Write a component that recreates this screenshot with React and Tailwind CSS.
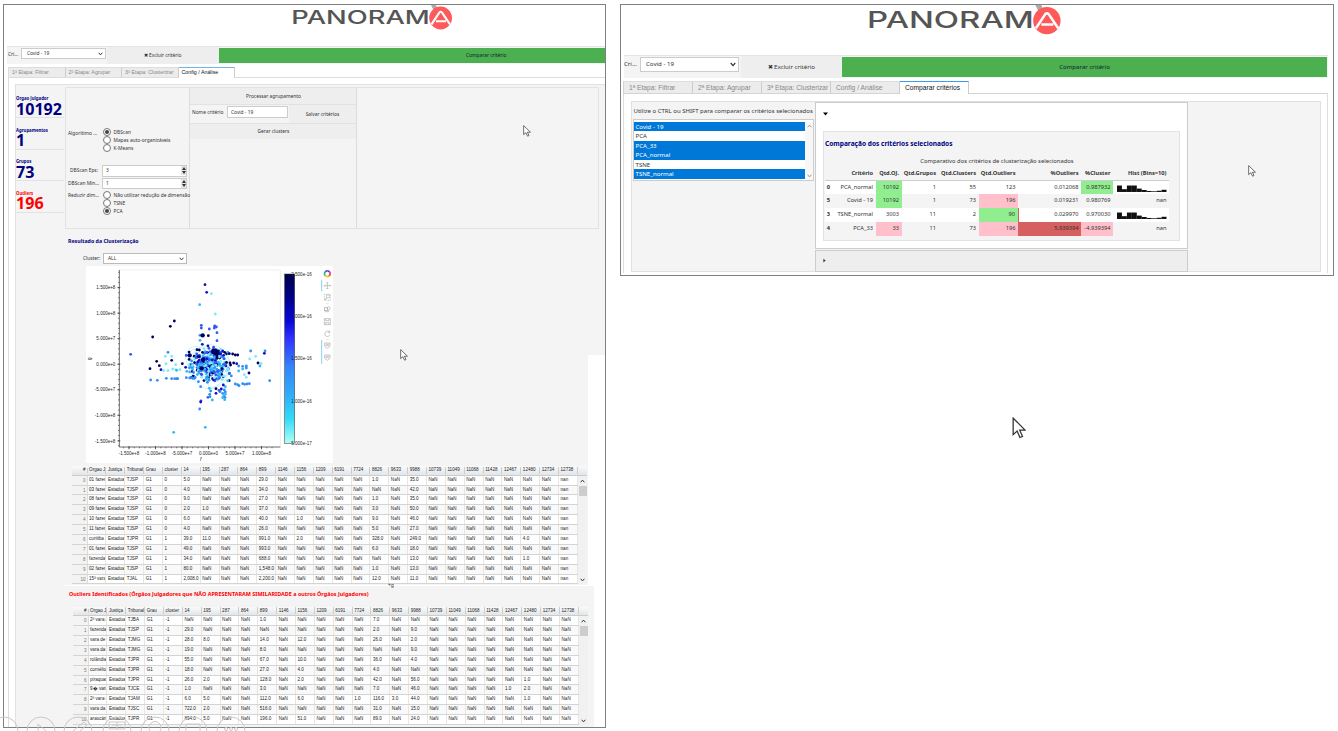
import React from "react";

const NOTO = "font-['Noto_Sans','Open_Sans',sans-serif]";

function Cursor({ className }) {
  return (
    <svg className={className} viewBox="0 0 12 20" preserveAspectRatio="none">
      <path d="M1 1 L1 16 L4.4 12.8 L6.8 18.6 L9 17.6 L6.6 12 L11.2 12 Z" fill="#fff" stroke="#333" strokeWidth="1.1" />
    </svg>
  );
}

function Logo({ className }) {
  return (
    <svg className={className} viewBox="0 0 162 26">
      <text x="-0.8" y="19.2" fontFamily="Inter, sans-serif" fontSize="18.6" fontWeight="500" fill="#555" textLength="138.5" lengthAdjust="spacingAndGlyphs">PANORAM</text>
      <path d="M139 0 L144 0 L146 5 L141.5 5 Z" fill="#aaa" />
      <circle cx="148.6" cy="13" r="11.4" fill="#ff5a5a" />
      <path d="M139.5 19.3 L147.3 7.6 Q148.7 6 150.1 7.6 L158 19.3 M144 16.2 H154" fill="none" stroke="#fff" strokeWidth="2.1" />
    </svg>
  );
}

function Radio({ label, on, className = "" }) {
  return (
    <div className={`flex items-center gap-[3px] h-[8px] ${className}`}>
      <span className="size-[8px] shrink-0 rounded-full border border-[#777] bg-white flex items-center justify-center">
        {on && <span className="size-[4px] rounded-full bg-[#444]" />}
      </span>
      <span>{label}</span>
    </div>
  );
}

function Chevron({ className }) {
  return (
    <svg className={className} viewBox="0 0 8 6"><path d="M1 1 L4 4.4 L7 1" fill="none" stroke="#333" strokeWidth="1.6" /></svg>
  );
}

function Spin({ value }) {
  return (
    <div className="ml-[3px] flex h-[11.5px] w-[85px] items-center border border-[#ccc] bg-white pl-[3px]">
      <span className="flex-1">{value}</span>
      <span className="flex h-[9px] w-[5px] flex-col items-center justify-between bg-[#e4e4e4] py-[1px]">
        <svg className="h-[3px] w-[4px]" viewBox="0 0 4 3"><path d="M0 3 L2 0 L4 3Z" fill="#333" /></svg>
        <svg className="h-[3px] w-[4px]" viewBox="0 0 4 3"><path d="M0 0 L2 3 L4 0Z" fill="#333" /></svg>
      </span>
    </div>
  );
}

const STATS = [
  ["Orgao Julgador", "10192", "text-[#000080]"],
  ["Agrupamentos", "1", "text-[#000080]"],
  ["Grupos", "73", "text-[#000080]"],
  ["Outliers", "196", "text-[#ff0000]"],
];

const N = "NaN";
const HEAD = ["Orgao J", "Justiça", "Tribunal", "Grau", "cluster", "14", "195", "287", "864", "899", "1146", "1156", "1209", "6191", "7724", "8826", "9633", "9988", "10739", "11049", "11068", "11428", "12467", "12480", "12734", "12738"];
const row = (name, trib, cl, vals, last = N) => {
  const cells = [name, "Estadual", trib, "G1", cl];
  for (const h of HEAD.slice(5)) cells.push(vals[h] ?? (h === "12738" ? last : N));
  return cells;
};
const CLUSTERS = [
  row("01 fazen", "TJSP", "0", { 14: "5.0", 899: "29.0", 8826: "1.0", 9988: "35.0" }, "nan"),
  row("03 fazen", "TJSP", "0", { 14: "4.0", 899: "34.0", 9988: "42.0" }, "nan"),
  row("08 fazen", "TJSP", "0", { 14: "9.0", 899: "27.0", 8826: "1.0", 9988: "35.0" }, "nan"),
  row("09 fazen", "TJSP", "0", { 14: "2.0", 195: "1.0", 899: "37.0", 8826: "3.0", 9988: "50.0" }, "nan"),
  row("10 fazen", "TJSP", "0", { 14: "6.0", 899: "40.0", 1156: "1.0", 8826: "9.0", 9988: "46.0" }, "nan"),
  row("11 fazen", "TJSP", "0", { 14: "4.0", 899: "26.0", 8826: "5.0", 9988: "27.0" }, "nan"),
  row("curitiba -", "TJPR", "1", { 14: "39.0", 195: "11.0", 899: "991.0", 1156: "2.0", 8826: "328.0", 9988: "249.0", 12480: "4.0" }, "nan"),
  row("01 fazen", "TJSP", "1", { 14: "49.0", 899: "993.0", 8826: "6.0", 9988: "18.0" }, "nan"),
  row("fazenda", "TJSP", "1", { 14: "34.0", 899: "688.0", 9988: "13.0", 12480: "1.0" }, "nan"),
  row("02 fazen", "TJSP", "1", { 14: "80.0", 899: "1,548.0", 8826: "1.0", 9988: "13.0" }, "nan"),
  row("15ª vara", "TJAL", "1", { 14: "2,008.0", 899: "2,200.0", 8826: "12.0", 9988: "11.0" }, "nan"),
];
const OUTLIERS = [
  row("2ª vara c", "TJBA", "-1", { 14: N, 899: "1.0", 8826: "7.0" }),
  row("fazenda", "TJSP", "-1", { 14: "29.0", 8826: "2.0", 9988: "9.0" }),
  row("vara de f", "TJMG", "-1", { 14: "28.0", 195: "8.0", 899: "14.0", 1156: "12.0", 8826: "26.0", 9988: "2.0" }),
  row("vara da f", "TJMG", "-1", { 14: "19.0", 899: "8.0", 9988: "9.0" }),
  row("rolândia", "TJPR", "-1", { 14: "55.0", 899: "67.0", 1156: "10.0", 8826: "36.0", 9988: "4.0" }),
  row("cornélio", "TJPR", "-1", { 14: "18.0", 899: "27.0", 1156: "4.0", 8826: "4.0" }),
  row("piraquar", "TJPR", "-1", { 14: "26.0", 195: "2.0", 899: "128.0", 1156: "2.0", 8826: "42.0", 9988: "56.0", 12480: "1.0" }),
  row("9� vara", "TJCE", "-1", { 14: "1.0", 899: "3.0", 8826: "7.0", 9988: "46.0", 12467: "1.0", 12480: "2.0" }),
  row("2ª vara c", "TJAM", "-1", { 14: "6.0", 195: "5.0", 899: "112.0", 1156: "6.0", 7724: "1.0", 8826: "116.0", 9633: "3.0", 9988: "44.0", 12480: "1.0" }),
  row("vara da f", "TJSC", "-1", { 14: "722.0", 195: "2.0", 899: "516.0", 8826: "31.0", 9988: "15.0" }),
  row("araucári", "TJPR", "-1", { 14: "894.0", 195: "5.0", 899: "196.0", 1156: "51.0", 8826: "89.0", 9988: "24.0" }),
];

function Grid({ rows, className = "" }) {
  return (
    <div className={`flex w-[515px] font-['Liberation_Sans',sans-serif] text-[4.55px] leading-none text-[#222] ${className}`}>
      <div className="flex w-[506px] flex-col">
        <div className="grid h-[9.7px] grid-cols-[15.5px_repeat(26,18.87px)] items-center border-b border-[#ccc] bg-gradient-to-b from-[#fafafa] to-[#e2e6ea]">
          <span className="border-r border-[#ccc] pr-[1px] text-right">#</span>
          {HEAD.map((h, i) => <span key={i} className="h-[7px] overflow-hidden whitespace-nowrap border-r border-[#ccc] pl-[1.6px] pt-[1.5px]">{h}</span>)}
        </div>
        {rows.map((r, y) => (
          <div key={y} className={`grid h-[9.9px] grid-cols-[15.5px_repeat(26,18.87px)] border-b border-[#d4d4d4] ${y % 2 ? "bg-[#f9f9f9]" : "bg-white"}`}>
            <span className="border-r border-[#ddd] bg-[#f3f3f3] pr-[1px] pt-[3px] text-right text-[#777]">{y}</span>
            {r.map((c, i) => <span key={i} className="overflow-hidden whitespace-nowrap border-r border-[#e6e6e6] pl-[1.6px] pt-[2px]">{c}</span>)}
          </div>
        ))}
      </div>
      <div className="flex w-[9px] flex-col items-center bg-[#f1f1f1]">
        <div className="h-[9.7px] w-full border-b border-[#ccc] bg-gradient-to-b from-[#fafafa] to-[#e2e6ea]" />
        <Chevron className="mt-[3px] h-[4px] w-[5px] rotate-180" />
        <div className="mt-[3px] h-[10px] w-[8px] bg-[#cdcdcd]" />
        <Chevron className="mb-[2px] mt-auto h-[4px] w-[5px]" />
      </div>
    </div>
  );
}

/* Scatter samples: x, y, tone */
const TONES = ["#000060", "#1010c0", "#3355f5", "#2f8ff5", "#35b8f2", "#7feaf5"];
const SPARSE = [
  [615, 179, 1], [620, 202, 1], [634, 206, 5], [599, 239, 4], [646, 267, 5], [523, 288, 0], [511, 304, 0], [458, 336, 0],
  [392, 388, 2], [604, 301, 2], [604, 309, 2], [628, 312, 2], [644, 303, 2], [649, 306, 2], [643, 309, 2], [651, 323, 2],
  [651, 347, 2], [600, 331, 3], [600, 346, 4], [607, 358, 1], [625, 332, 0], [504, 382, 3], [515, 394, 5], [496, 394, 5],
  [515, 406, 0], [470, 409, 0], [478, 422, 0], [450, 431, 0], [483, 434, 1], [498, 416, 5], [527, 419, 5], [491, 437, 5],
  [504, 437, 5], [452, 465, 3], [472, 466, 3], [499, 460, 3], [515, 461, 3], [524, 461, 3], [530, 461, 3], [533, 461, 3], [547, 416, 0],
  [518, 432, 5], [527, 434, 5], [557, 427, 1], [559, 458, 3], [569, 459, 3], [577, 459, 3], [583, 460, 3], [530, 436, 4], [540, 434, 5],
  [752, 378, 3], [795, 378, 3], [793, 385, 1], [749, 402, 5], [767, 394, 5], [783, 415, 5], [774, 414, 0], [780, 423, 4],
  [747, 444, 0], [809, 467, 3], [739, 457, 5], [733, 449, 5], [716, 438, 4], [728, 432, 4], [739, 423, 3], [728, 424, 3],
  [716, 423, 3], [739, 429, 3], [706, 477, 3], [713, 479, 3], [717, 482, 3], [728, 476, 3], [734, 478, 3], [741, 477, 3], [748, 476, 3],
  [602, 485, 3], [603, 528, 2], [602, 531, 1], [599, 552, 3], [521, 622, 4], [616, 607, 4],
  [674, 382, 0], [688, 386, 0], [698, 387, 0], [706, 390, 0], [713, 390, 0], [690, 414, 0], [701, 414, 0], [710, 416, 1],
  [671, 391, 1], [662, 387, 1], [668, 378, 1], [688, 446, 2], [624, 517, 2], [629, 508, 3], [637, 525, 4], [648, 491, 0], [648, 505, 1],
  [660, 500, 3], [668, 505, 3], [673, 495, 3], [676, 485, 4], [671, 512, 4], [674, 524, 4], [676, 508, 4], [670, 480, 1], [628, 490, 4], [632, 498, 3],
  [664, 492, 1], [657, 496, 2], [676, 501, 3], [668, 518, 4], [630, 515, 3], [675, 517, 3],
];
const BIG = [[608, 331], [569, 391], [640, 380], [609, 404], [647, 378], [605, 430]];

function cloud() {
  let seed = 17;
  const rnd = () => ((seed = (seed * 16807) % 2147483647) / 2147483647);
  const out = [];
  for (let i = 0; i < 300; i++) {
    const gx = (rnd() + rnd()) / 2 - 0.5;
    const gy = (rnd() + rnd()) / 2 - 0.5;
    const t = rnd();
    out.push([626 + gx * 138, 420 + gy * 118, t < 0.13 ? 0 : t < 0.27 ? 1 : t < 0.47 ? 2 : t < 0.68 ? 3 : t < 0.87 ? 4 : 5]);
  }
  for (let i = 0; i < 14; i++) out.push([632 + rnd() * 26, 374 + rnd() * 14, 0]);
  return out;
}

function Scatter() {
  const yl = ["1.500e+8", "1.000e+8", "5.000e+7", "0.000e+0", "-5.000e+7", "-1.000e+8", "-1.500e+8"];
  const xl = ["-1.500e+8", "-1.000e+8", "-5.000e+7", "0.000e+0", "5.000e+7", "1.000e+8"];
  const cl = ["2.500e-16", "2.000e-16", "1.500e-16", "1.000e-16", "5.000e-17"];
  const ticksY = Array.from({ length: 35 }, (_, i) => 142 + i * 15.3);
  const ticksX = Array.from({ length: 29 }, (_, i) => 371 + i * 15.9);
  return (
    <svg className="h-[197px] w-[247px] bg-white" viewBox="258 123 741 591" fontFamily="Liberation Sans, sans-serif" fontSize="13.6" fill="#222">
      <defs>
        <linearGradient id="bar" x1="0" y1="0" x2="0" y2="1">
          <stop offset="0" stopColor="#00004c" /><stop offset=".12" stopColor="#000080" /><stop offset=".28" stopColor="#0808dc" />
          <stop offset=".38" stopColor="#3030ff" /><stop offset=".55" stopColor="#3484fa" /><stop offset=".72" stopColor="#2fb0f8" />
          <stop offset=".86" stopColor="#35dcf6" /><stop offset="1" stopColor="#b0fff4" />
        </linearGradient>
      </defs>
      <path d="M358 135 H841 V665" fill="none" stroke="#e5e5e5" strokeWidth="2" />
      <path d="M358 135 V666 H841" fill="none" stroke="#444" strokeWidth="2.4" />
      {ticksY.map((y) => y < 665 && <path key={y} d={`M354 ${y} H358`} stroke="#444" strokeWidth="2" />)}
      {ticksX.map((x) => x < 841 && <path key={x} d={`M${x} 666 V670`} stroke="#444" strokeWidth="2" />)}
      {yl.map((t, i) => (
        <g key={t}><path d={`M352 ${188 + i * 76.6} H361`} stroke="#444" strokeWidth="2.4" /><text x="346" y={193 + i * 76.6} textAnchor="end">{t}</text></g>
      ))}
      {xl.map((t, i) => (
        <g key={t}><path d={`M${387 + i * 79.5} 663 V673`} stroke="#444" strokeWidth="2.4" /><text x={387 + i * 79.5} y="690" textAnchor="middle">{t}</text></g>
      ))}
      <text x="600" y="709" fontStyle="italic" fontSize="15">f</text>
      <text x="0" y="0" transform="translate(274 406) rotate(-90)" fontSize="15">g</text>
      <g fill="none" stroke="#9be8f2" strokeWidth="1.5">
        {[16, 24, 32].map((r) => <circle key={r} cx="588" cy="396" r={r} />)}
        {[30, 40, 50].map((r) => <ellipse key={r} cx="645" cy="420" rx={r * 0.9} ry={r} />)}
        <ellipse cx="630" cy="425" rx="58" ry="66" />
        <ellipse cx="655" cy="450" rx="20" ry="45" transform="rotate(35 655 450)" />
      </g>
      {cloud().concat(SPARSE).map(([x, y, t], i) => <circle key={i} cx={x} cy={y} r="4.2" fill={TONES[t]} />)}
      {BIG.map(([x, y], i) => <circle key={i} cx={x} cy={y} r="6.5" fill="#000066" />)}
      <rect x="854" y="147" width="30" height="508" fill="url(#bar)" stroke="#333" strokeWidth="1.5" />
      {cl.map((t, i) => <text key={t} x="874" y={152 + i * 127}>{t}</text>)}
      {["#e33", "#f90", "#ec0", "#3b3", "#19c", "#25c", "#83c", "#d29"].map((c, i) => (
        <circle key={c} cx="982" cy="146" r="8.5" fill="none" stroke={c} strokeWidth="5" strokeDasharray="6.7 46.7" strokeDashoffset={-i * 6.68} />
      ))}
      <g fill="none" stroke="#aaa" strokeWidth="2">
        <path d="M982 172 V192 M972 182 H992 M979 175 L982 172 L985 175 M979 189 L982 192 L985 189 M975 179 L972 182 L975 185 M989 179 L992 182 L989 185" />
        <rect x="973" y="208" width="18" height="18" strokeDasharray="3 2" /><circle cx="984" cy="214" r="5" /><path d="M980 218 L974 225" strokeWidth="3" />
        <path d="M977 236 H987" stroke="#ddd" />
        <rect x="973" y="248" width="9" height="9" /><circle cx="986" cy="250" r="4.5" /><path d="M974 260 H986 L984 255" />
        <path d="M973 281 H991 V299 H973 Z M977 281 V287 H987 V281 M977 299 V293 H987 V299" />
        <path d="M989 322 A8 8 0 1 0 990 329 M989 317 V323 H983" /><path d="M977 344 H987" stroke="#ddd" />
        <path d="M974 354 H990 V364 L982 370 L974 364 Z M977 358 H987 M977 362 H987" />
        <path d="M974 390 H990 V400 L982 406 L974 400 Z M977 394 H987 M977 398 H987" />
      </g>
      <path d="M965 164 V199 M965 345 V417" stroke="#8fd0ee" strokeWidth="3" />
    </svg>
  );
}

function LeftTab({ children, active }) {
  return (
    <div className={`shrink-0 overflow-hidden whitespace-nowrap border-r border-[#ccc] pl-[3px] font-['Liberation_Sans',sans-serif] text-[5.3px] leading-[8px] ${active ? "h-[11px] w-[56px] border-t border-t-[#6bb5ee] bg-white text-[#111]" : "h-[10px] w-[56.5px] border-t border-t-[#ddd] bg-[#ececec] text-[#888]"}`}>
      {children}
    </div>
  );
}

function LeftWindow() {
  return (
    <section className={`ml-[3px] mt-[4px] h-[724px] w-[603px] overflow-hidden border border-[#808080] bg-white ${NOTO} text-[4.85px] leading-none text-[#333]`}>
      <header className="flex h-[41px] pl-[288px]"><Logo className="h-[26px] w-[162px]" /></header>
      <div className="ml-[3px] flex h-[18px] items-center border-t border-[#e4e4e4] bg-[#f4f4f4]">
        <span className="w-[14px] pb-[3px] pl-px">Cri...</span>
        <div className="mb-[4px] flex h-[11.5px] w-[85px] items-center justify-between border border-[#ccc] bg-white pl-[5px] pr-[2px]">Covid - 19<Chevron className="h-[4px] w-[5px]" /></div>
        <div className="ml-px flex h-[17px] w-[112px] items-center justify-center bg-[#eee]">✖ Excluir critério</div>
        <div className="flex h-[15px] w-[387px] items-center justify-center bg-[#4caf50] pl-[149px] text-[#123]">Comparar critério</div>
      </div>
      <div className="ml-[4px] mt-[3px] flex h-[10.5px] border-b border-l border-[#ddd]">
        <LeftTab>1ª Etapa: Filtrar</LeftTab><LeftTab>2ª Etapa: Agrupar</LeftTab><LeftTab>3ª Etapa: Clusterizar</LeftTab><LeftTab active>Config / Análise</LeftTab>
      </div>
      <div className="ml-[4px] flex h-[660px] border-l border-[#ddd] pl-[6px] pt-[6.5px]">
        <aside className="flex w-[50px] shrink-0 flex-col border-l border-t border-[#e2e2e2] bg-[#f4f4f4]">
          {STATS.map(([k, v, c], i) => (
            <div key={k} className={`w-[48px] border-b border-[#e2e2e2] font-bold ${i ? "h-[31.5px] pt-[9.5px]" : "h-[33px] pt-[11px]"} ${c}`}>
              <div className="whitespace-nowrap text-[4.3px] leading-[5px]">{k}</div>
              <div className="pt-[1.5px] text-[16.1px] leading-[13px]">{v}</div>
            </div>
          ))}
        </aside>
        <main className="flex w-[541px] shrink-0 flex-col">
          <div className="flex h-[270.5px] shrink-0 flex-col border-t border-[#e2e2e2] bg-[#f4f4f4] pt-[2px]">
            <div className="flex h-[142px] w-[534px] shrink-0 border border-[#e2e2e2]">
              <div className="h-full w-[124px] shrink-0 border-r border-[#ddd] pl-px">
                <div className="mt-[40px] flex"><span className="w-[35.5px] pl-px pt-[2.5px]">Algorítimo ...</span>
                  <div><Radio label="DBScan" on /><Radio label="Mapas auto-organizáveis" /><Radio label="K-Means" /></div>
                </div>
                <div className="mt-[13px] flex items-center"><span className="w-[32px] whitespace-nowrap pr-px text-right">DBScan Eps:</span><Spin value="3" /></div>
                <div className="mt-[1px] flex items-center"><span className="w-[32px] whitespace-nowrap pl-px">DBScan Min...</span><Spin value="1" /></div>
                <div className="mt-[2px] flex whitespace-nowrap"><span className="w-[35.5px] shrink-0 pl-px pt-[2px]">Reduzir dim...</span>
                  <div><Radio label="Não utilizar redução de dimensão" /><Radio label="TSNE" /><Radio label="PCA" on /></div>
                </div>
              </div>
              <div className="h-full w-[167px] shrink-0 border-r border-[#ddd]">
                <div className="flex h-[17px] items-center justify-center border-b border-[#e2e2e2] bg-[#eee] pl-px">Processar agrupamento</div>
                <div className="flex h-[18px] items-center pl-[2px]">
                  <span className="w-[35px] whitespace-nowrap pb-[3px]">Nome critério</span>
                  <span className="mb-[4px] flex h-[11.5px] w-[61px] items-center border border-[#ccc] bg-white pl-[3px]">Covid - 19</span>
                  <span className="ml-px flex h-full flex-1 items-center justify-center bg-[#eee]">Salvar critérios</span>
                </div>
                <div className="flex h-[16px] items-center justify-center border-t border-[#e2e2e2] bg-[#eee] pl-px">Gerar clusters</div>
              </div>
            </div>
            <h2 className="mt-[9px] shrink-0 pl-[3px] text-[5.25px] font-bold leading-[7px] text-[#000080]">Resultado da Clusterização</h2>
            <div className="mt-[8px] flex shrink-0 items-center pl-[18px]"><span className="w-[20px]">Cluster:</span>
              <span className="flex h-[11px] w-[84px] items-center justify-between border border-[#bbb] bg-white pl-[4px] pr-[2px]">ALL<Chevron className="h-[4px] w-[5px]" /></span></div>
            <div className="relative z-10 mt-[2px] h-[197px] w-[268px] shrink-0 pl-[21px]"><Scatter /></div>
          </div>
          <div className="h-[230px] w-[523px] shrink-0 bg-[#f4f4f4] pl-[7px] pt-[111.5px]"><Grid rows={CLUSTERS} /></div>
          <div className="relative mt-px h-[141px] w-[529px] shrink-0 bg-[#f4f4f4] pl-[8px] pt-[3px]">
            <span className="absolute left-[323px] top-[-3px] text-[5px]">+g</span>
            <h2 className="ml-[-4px] h-[18px] whitespace-nowrap pt-px text-[5.44px] font-bold leading-[8px] text-[#ff0000]">Outliers Identificados (Órgãos Julgadores que NÃO APRESENTARAM SIMILARIDADE a outros Órgãos Julgadores)</h2>
            <Grid rows={OUTLIERS} />
          </div>
        </main>
      </div>
    </section>
  );
}

const TABS = ["1ª Etapa: Filtrar", "2ª Etapa: Agrupar", "3ª Etapa: Clusterizar", "Config / Análise", "Comparar critérios"];
const OPTIONS = [["Covid - 19", 1], ["PCA", 0], ["PCA_33", 1], ["PCA_normal", 1], ["TSNE", 0], ["TSNE_normal", 1]];
const COMPARE = [
  ["0", "PCA_normal", "10192", "1", "55", "123", "0.012068", "0.987932", "H"],
  ["5", "Covid - 19", "10192", "1", "73", "196", "0.019231", "0.980769", "nan"],
  ["3", "TSNE_normal", "3003", "11", "2", "90", "0.029970", "0.970030", "H"],
  ["4", "PCA_33", "33", "11", "73", "196", "5.939394", "-4.939394", "nan"],
];
const SHADE = {
  "0-2": "bg-[#90ee90]", "1-2": "bg-[#90ee90]", "3-2": "bg-[#ffc0cb]", "1-5": "bg-[#ffc0cb]", "2-5": "bg-[#90ee90]",
  "3-5": "bg-[#ffc0cb]", "3-6": "bg-[#d65f5f]", "0-7": "bg-[#90ee90]", "3-7": "bg-[#ffc0cb]", "2-6": "border-l border-[#d65f5f]",
};
const BARS = [6.5, 2.8, 6.5, 6.5, 3.4, 2, 1, 0.7, 1.2, 2.2];

function RightWindow() {
  return (
    <section className={`ml-[14px] mt-[4px] h-[272px] w-[714px] overflow-hidden border border-[#808080] bg-white ${NOTO} text-[6.1px] leading-none text-[#333]`}>
      <header className="flex h-[50px] pl-[247px]"><Logo className="h-[31.3px] w-[195px]" /></header>
      <div className="ml-[3px] flex h-[23px] w-[704px] border-t border-[#e4e4e4] bg-[#f4f4f4]">
        <span className="w-[16px] pt-[5px]">Cri...</span>
        <div className="mt-px flex h-[14.5px] w-[98.5px] items-center justify-between border border-[#ccc] bg-white pl-[5px] pr-[2px]">Covid - 19<Chevron className="h-[5px] w-[6px]" /></div>
        <div className="ml-[2px] flex w-[101.5px] items-center justify-center bg-[#eee]">✖ Excluir critério</div>
        <div className="mt-px flex h-[19.5px] w-[485px] items-center justify-center bg-[#4caf50] pt-px text-[#123]">Comparar critério</div>
      </div>
      <div className="ml-[2px] mt-[3px] flex h-[13px] w-[705px] border-b border-l border-[#d4d4d4] font-['Liberation_Sans',sans-serif]">
        {TABS.map((t, i) => (
          <div key={t} className={`w-[69px] overflow-hidden whitespace-nowrap border-r border-t border-r-[#ccc] pl-[5px] text-[6.7px] leading-[11px] ${i === 4 ? "h-[13px] border-t-[#3b9be8] bg-white text-[#111]" : "h-full border-t-[#ddd] bg-[#ececec] text-[#888]"}`}>{t}</div>
        ))}
      </div>
      <div className="ml-[2px] h-[179px] w-[705px] border-x border-[#dedede] pl-[7px] pt-[7px]">
        <div className="flex h-[171px] w-[690px] border border-[#e0e0e0] bg-[#f4f4f4]">
          <div className="w-[183px] shrink-0 pl-[1px]">
            <p className="mt-[5px] h-[12px] whitespace-nowrap pl-[0.5px] text-[6.02px] leading-[8px]">Utilize o CTRL ou SHIFT para comparar os critérios selecionados</p>
            <div className="flex h-[62px] w-[181px] border border-[#ccc] bg-white pt-[1.5px]">
              <div className="w-[171px]">
                {OPTIONS.map(([o, s]) => <div key={o} className={`h-[9.5px] pl-[1.5px] leading-[9px] ${s ? "bg-[#0078d7] text-white" : ""}`}>{o}</div>)}
              </div>
              <div className="flex flex-1 flex-col items-center justify-between bg-[#f0f0f0] py-[2px] opacity-50"><Chevron className="h-[4px] w-[5px] rotate-180" /><Chevron className="h-[4px] w-[5px]" /></div>
            </div>
          </div>
          <div className="w-[373px]">
            <div className="h-[147px] border border-[#ccc] bg-white pl-[7px] pt-[9px]">
              <svg className="h-[4px] w-[5px]" viewBox="0 0 5 4"><path d="M0 0.5 H5 L2.5 3.5Z" fill="#000" /></svg>
              <div className="mt-[14.5px] h-[110px] w-[357px] border border-[#e2e2e2] bg-[#f4f4f4] pl-px pt-[7.5px]">
                <h2 className="text-[6.58px] font-bold leading-[9px] text-[#000080]">Comparação dos critérios selecionados</h2>
                <table className="mt-[8px] w-[344px] table-fixed border-collapse text-right text-[5.7px] leading-none">
                  <caption className="h-[11.5px] text-[5.85px] leading-[11px]">Comparativo dos critérios de clusterização selecionados</caption>
                  <colgroup>
                    <col className="w-[7.5px]" /><col className="w-[43px]" /><col className="w-[26px]" /><col className="w-[37px]" /><col className="w-[40px]" />
                    <col className="w-[39.5px]" /><col className="w-[63px]" /><col className="w-[32px]" /><col className="w-[56px]" />
                  </colgroup>
                  <thead>
                    <tr className="h-[13px] border-b border-[#ccc]">
                      {["", "Critério", "Qtd.OJ.", "Qtd.Grupos", "Qtd.Clusters", "Qtd.Outliers", "%Outliers", "%Cluster", "Hist (Bins=10)"].map((h) => <th key={h} className="whitespace-nowrap p-0 pr-[2.5px]">{h}</th>)}
                    </tr>
                  </thead>
                  <tbody>
                    {COMPARE.map((r, y) => (
                      <tr key={y} className={`h-[13.8px] ${y % 2 ? "" : "bg-white"}`}>
                        {r.map((c, x) => (
                          <td key={x} className={`p-0 pr-[2.5px] ${x === 0 ? "font-bold" : ""} ${SHADE[`${y}-${x}`] ?? ""}`}>
                            {c === "H" ? (
                              <svg className="ml-auto mt-px h-[7px] w-[49.5px]" viewBox="0 0 50 7">{BARS.map((b, i) => <rect key={i} x={i * 5} y={7 - b} width="5" height={b} fill="#111" />)}</svg>
                            ) : c}
                          </td>
                        ))}
                      </tr>
                    ))}
                  </tbody>
                </table>
              </div>
            </div>
            <div className="mt-px flex h-[21.5px] items-center border border-[#ccc] bg-[#eee] pl-[7px]"><svg className="h-[5px] w-[3px]" viewBox="0 0 4 5"><path d="M0.5 0 V5 L3.5 2.5Z" fill="#333" /></svg></div>
          </div>
        </div>
      </div>
    </section>
  );
}

export default function App() {
  return (
    <div className="relative flex h-[731px] w-[1338px] items-start overflow-hidden bg-white">
      <LeftWindow />
      <RightWindow />
      <Cursor className="absolute left-[523px] top-[125px] h-[12px] w-[8px]" />
      <Cursor className="absolute left-[400px] top-[349px] h-[12px] w-[8px]" />
      <Cursor className="absolute left-[1248px] top-[165px] h-[12px] w-[8px]" />
      <Cursor className="absolute left-[1012px] top-[417px] h-[22px] w-[14px]" />
      <svg className="absolute left-0 top-[711px] h-[20px] w-[260px]" viewBox="0 0 260 20" fill="none" stroke="#c8c8c8" strokeWidth="1">
        {[4, 41, 78, 117, 155, 193, 231].map((x) => <circle key={x} cx={x} cy="20" r="14" />)}
        <path d="M73 20 L84 11 L87 14 L80 20 M109 18 V11 H125 V18 Z M112 14 H122 M117 11 V18 M150 20 A6 6 0 1 1 160 20 M186 20 V13 H200 V20 M38 20 V13 L46 20" />
        {[226, 231, 236].map((x) => <circle key={x} cx={x} cy="18" r="1.5" />)}
      </svg>
    </div>
  );
}
